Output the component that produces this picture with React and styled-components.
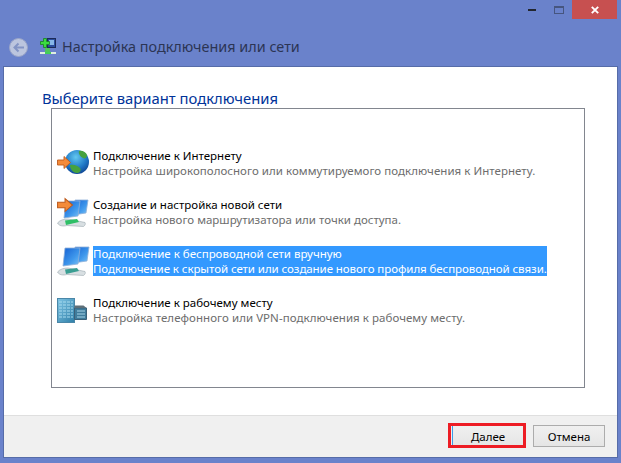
import React from 'react';
import styled, { createGlobalStyle } from 'styled-components';

const GlobalStyle = createGlobalStyle`
  html, body {
    margin: 0;
    padding: 0;
    background: #6a82cb;
  }
  * {
    box-sizing: border-box;
  }
`;

const Frame = styled.div`
  width: 621px;
  height: 463px;
  display: flex;
  flex-direction: column;
  background: #6a82cb;
  font-family: "Noto Sans", "Open Sans", sans-serif;
  overflow: hidden;
`;

const CaptionBar = styled.div`
  height: 19px;
  padding-right: 4px;
  display: flex;
  justify-content: flex-end;
`;

const CaptionButton = styled.div`
  width: ${props => props.width}px;
  height: 19px;
  display: flex;
  align-items: center;
  justify-content: center;
  background: ${props => props.danger ? '#c75050' : 'transparent'};
`;

const NavBar = styled.div`
  height: 48px;
  padding: 19px 0 0 9px;
  display: flex;
  align-items: flex-start;
`;

const IconSlot = styled.div`
  width: ${props => props.width}px;
  height: 20px;
  flex: none;
  line-height: 0;
`;

const NavTitle = styled.div`
  margin-top: -1px;
  font-size: 14.4px;
  line-height: 20px;
  color: #2c3554;
  white-space: nowrap;
`;

const Client = styled.div`
  width: 613px;
  height: 390px;
  margin-left: 4px;
  display: flex;
  flex-direction: column;
  background: #ffffff;
  box-shadow: 0 0 0 1px #566ca8;
`;

const Content = styled.div`
  flex: 1;
  padding: 0 32px 27px 38px;
  display: flex;
  flex-direction: column;
`;

const Heading = styled.h1`
  margin: 0;
  padding-top: 20px;
  height: 41px;
  font-size: 14.8px;
  line-height: 22px;
  font-weight: 400;
  color: #003399;
  white-space: nowrap;
`;

const ListBox = styled.div`
  margin-left: 9px;
  flex: 1;
  border: 1px solid #82868f;
  padding: 39px 4px 0 5px;
  display: flex;
  flex-direction: column;
  gap: 19px;
`;

const Row = styled.div`
  height: 30px;
  display: flex;
  align-items: flex-start;
`;

const RowIcon = styled.div`
  width: 36px;
  height: 30px;
  flex: none;
  line-height: 0;
`;

const RowText = styled.div`
  font-size: 11.5px;
  line-height: 15px;
  white-space: nowrap;
  background: ${props => props.selected ? '#3399ff' : 'transparent'};
`;

const RowTitle = styled.div`
  color: ${props => props.selected ? '#ffffff' : '#000000'};
`;

const RowHint = styled.div`
  color: ${props => props.selected ? '#ffffff' : '#6d6d6d'};
  letter-spacing: ${props => props.tracking || 0}px;
`;

const Footer = styled.div`
  height: 42px;
  padding: 9px 12px 0 0;
  display: flex;
  justify-content: flex-end;
  gap: 9px;
  background: #f0f0f0;
  border-top: 1px solid #dfdfdf;
`;

const Button = styled.button`
  position: relative;
  width: 72px;
  height: 22px;
  padding: 0;
  font-family: inherit;
  font-size: 11.5px;
  color: #000000;
  background: linear-gradient(#f0f0f0, #e5e5e5);
  border: 1px solid #acacac;
  border-left-color: ${props => props.primary ? '#3c9be8' : '#acacac'};
  border-radius: 0;
`;

const Highlight = styled.span`
  position: absolute;
  left: -5px;
  top: -3px;
  width: 78px;
  height: 25px;
  border: 3px solid #ed1c24;
  pointer-events: none;
`;

const MinimizeIcon = () => (
  <svg width="8" height="2" viewBox="0 0 8 2"><rect width="8" height="2" fill="#22262f" /></svg>
);

const MaximizeIcon = () => (
  <svg width="10" height="8" viewBox="0 0 10 8">
    <rect x=".5" y=".5" width="9" height="7" fill="none" stroke="#46557f" />
    <rect x="0" y="0" width="10" height="2" fill="#46557f" />
  </svg>
);

const CloseIcon = () => (
  <svg width="8" height="8" viewBox="0 0 8 8">
    <path d="M.8 .8 7.2 7.2M7.2 .8 .8 7.2" stroke="#ffffff" strokeWidth="1.9" />
  </svg>
);

const BackIcon = () => (
  <svg width="19" height="19" viewBox="0 0 19 19">
    <circle cx="9.5" cy="9.5" r="9" fill="#bcc5de" stroke="#9aa5c8" />
    <path d="M15 9.5H5.5M9.5 5.5l-4 4 4 4" fill="none" stroke="#8394c4" strokeWidth="2" />
  </svg>
);

const SetupIcon = () => (
  <svg width="16" height="17" viewBox="0 0 16 17">
    <rect x="7.5" y=".5" width="8" height="9" fill="#2a4c9c" stroke="#1c2a58" />
    <rect x="9" y="2" width="5" height="5" fill="#86b6e8" />
    <path d="M3.5 .5h3v3h3v3h-3v3h-3v-3h-3v-3h3z" fill="#3bdc3f" stroke="#17801f" strokeWidth=".8" />
    <rect x="5" y="10" width="5" height="4" fill="#4fc75a" />
    <rect x="0" y="14" width="16" height="2" fill="#dfeee0" />
    <rect x="5" y="14" width="6" height="2" fill="#41cf5a" />
  </svg>
);

const Arrow = () => (
  <path d="M.5 4H7V.5L13.5 6.5 7 12.5V9H.5z" fill="#f48b3a" stroke="#bd5a1c" strokeWidth=".9" />
);

// same gradient id is shared by the network icons
const Screen = ({ x, y, w, h }) => (
  <path
    d={`M${x + 2} ${y}H${x + w}L${x + w - 2} ${y + h - 2}L${x} ${y + h}z`}
    fill="url(#screen)"
    stroke="#8fb0d8"
    strokeWidth=".8"
  />
);

const Cable = ({ y, color }) => (
  <g transform={`translate(0 ${y})`}>
    <path d="M.5 5C3 2 7 1 11 1l17 3.5c.8 1.5 0 3-1.500 4L10 7.500C6 8.500 2 8 .5 5z" fill="#d8dfe2" stroke="#9aa8ae" strokeWidth=".6" />
    <path d="M8 2.500 20 1l2 3-13 3z" fill={color} />
  </g>
);

const GlobeIcon = () => (
  <svg width="36" height="30" viewBox="0 0 36 30">
    <defs>
      <radialGradient id="sea" cx="45%" cy="30%" r="75%">
        <stop offset="0" stopColor="#63c8f0" />
        <stop offset=".6" stopColor="#1f78c6" />
        <stop offset="1" stopColor="#0f3f8c" />
      </radialGradient>
    </defs>
    <circle cx="20" cy="14" r="12" fill="url(#sea)" />
    <path d="M13 17c4-1 8 1 10 3 2 3-1 5-3 5-4 0-7-4-7-8zM22 3c3-1 7 1 8 4 0 3-2 4-4 3s-5-4-4-7z" fill="#46a23e" />
    <g transform="translate(0 8)"><Arrow /></g>
  </svg>
);

const ScreenGradient = () => (
  <defs>
    <linearGradient id="screen" x1="0" y1="0" x2="1" y2="1">
      <stop offset="0" stopColor="#1560d2" />
      <stop offset=".6" stopColor="#3f98ec" />
      <stop offset="1" stopColor="#7cc4f7" />
    </linearGradient>
  </defs>
);

const NewNetworkIcon = () => (
  <svg width="36" height="32" viewBox="0 0 36 32">
    <ScreenGradient />
    <Screen x={16} y={3} w={15} h={15} />
    <Screen x={7} y={4} w={16} h={17} />
    <Cable y={21} color="#2fbf66" />
    <g transform="translate(0 1) scale(1.15 1.08)"><Arrow /></g>
  </svg>
);

const WirelessIcon = () => (
  <svg width="36" height="30" viewBox="0 0 36 30">
    <ScreenGradient />
    <Screen x={16} y={1} w={16} h={16} />
    <Screen x={6} y={2} w={17} h={18} />
    <Cable y={21} color="#3a9e92" />
  </svg>
);

const WorkplaceIcon = () => (
  <svg width="36" height="30" viewBox="0 0 36 30">
    <defs>
      <linearGradient id="tower" x1="0" y1="0" x2="1" y2="1">
        <stop offset="0" stopColor="#7fc4e4" />
        <stop offset="1" stopColor="#2f7fa8" />
      </linearGradient>
    </defs>
    <rect x=".5" y="3.500" width="17" height="24" fill="url(#tower)" stroke="#4a87a8" />
    <path d="M2 7h14M2 10h14M2 13h14M2 16h14M2 19h14M2 22h14" stroke="#a8dcf0" strokeWidth="1.2" strokeDasharray="3 1" />
    <path d="M17.500 13h12v11.500h-12z" fill="#3f7c9c" stroke="#3a6078" />
    <path d="M17.500 10.500h9l3 2.500h-12z" fill="#5f6f78" />
    <path d="M20 16h8M20 19h8M20 22h8" stroke="#a5d4e8" strokeWidth="1.200" />
  </svg>
);

const options = [
  {
    icon: <GlobeIcon />,
    title: 'Подключение к Интернету',
    hint: 'Настройка широкополосного или коммутируемого подключения к Интернету.',
    tracking: 0.04,
  },
  {
    icon: <NewNetworkIcon />,
    title: 'Создание и настройка новой сети',
    hint: 'Настройка нового маршрутизатора или точки доступа.',
  },
  {
    icon: <WirelessIcon />,
    title: 'Подключение к беспроводной сети вручную',
    hint: 'Подключение к скрытой сети или создание нового профиля беспроводной связи.',
    tracking: -0.07,
    selected: true,
  },
  {
    icon: <WorkplaceIcon />,
    title: 'Подключение к рабочему месту',
    hint: 'Настройка телефонного или VPN-подключения к рабочему месту.',
    tracking: 0.05,
  },
];

const App = () => (
  <Frame>
    <GlobalStyle />
    <CaptionBar>
      <CaptionButton width={27}><MinimizeIcon /></CaptionButton>
      <CaptionButton width={27}><MaximizeIcon /></CaptionButton>
      <CaptionButton width={45} danger><CloseIcon /></CaptionButton>
    </CaptionBar>
    <NavBar>
      <IconSlot width={31}><BackIcon /></IconSlot>
      <IconSlot width={22}><SetupIcon /></IconSlot>
      <NavTitle>Настройка подключения или сети</NavTitle>
    </NavBar>
    <Client>
      <Content>
        <Heading>Выберите вариант подключения</Heading>
        <ListBox>
          {options.map(option => (
            <Row key={option.title}>
              <RowIcon>{option.icon}</RowIcon>
              <RowText selected={option.selected}>
                <RowTitle selected={option.selected}>{option.title}</RowTitle>
                <RowHint selected={option.selected} tracking={option.tracking}>{option.hint}</RowHint>
              </RowText>
            </Row>
          ))}
        </ListBox>
      </Content>
      <Footer>
        <Button primary>
          Далее
          <Highlight />
        </Button>
        <Button>Отмена</Button>
      </Footer>
    </Client>
  </Frame>
);

export default App;
